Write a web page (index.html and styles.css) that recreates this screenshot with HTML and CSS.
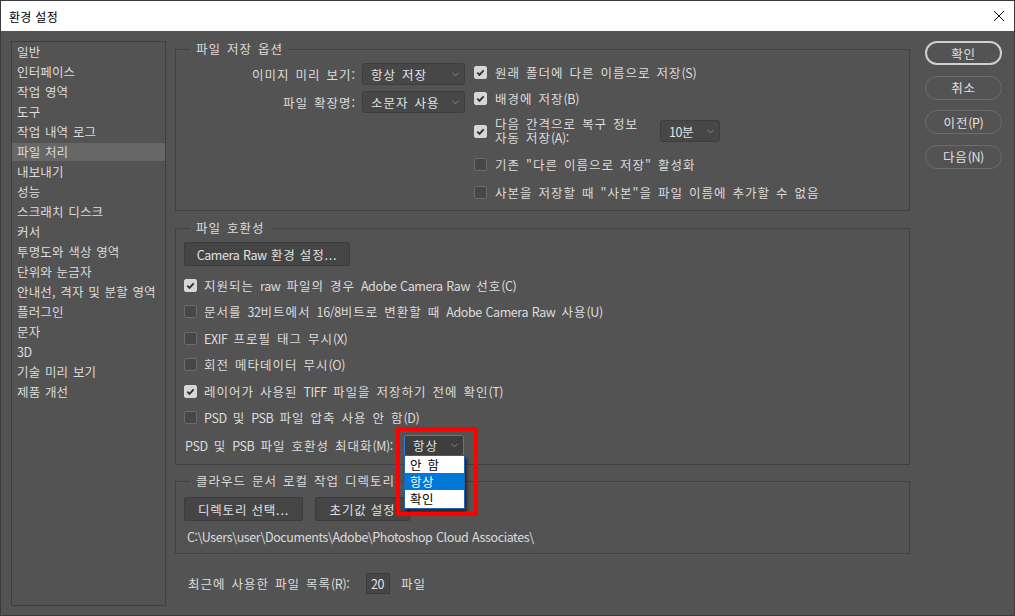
FILE: index.html
```html
<!DOCTYPE html>
<html lang="ko">
<head>
  <meta charset="UTF-8" />
  <title>환경 설정</title>
  <link rel="stylesheet" href="styles.css">
</head>
<body>
  <div class="window">

    <!-- Title bar -->
    <div class="titlebar">
      <span class="title">환경 설정</span>
      <svg class="close" viewBox="0 0 10 10" width="10" height="10">
        <path d="M0 0 L10 10 M10 0 L0 10" stroke="#111" stroke-width="1" fill="none"/>
      </svg>
    </div>

    <div class="content">

      <!-- Category list -->
      <ul class="nav">
        <li>일반</li>
        <li>인터페이스</li>
        <li>작업 영역</li>
        <li>도구</li>
        <li>작업 내역 로그</li>
        <li class="active">파일 처리</li>
        <li>내보내기</li>
        <li>성능</li>
        <li>스크래치 디스크</li>
        <li>커서</li>
        <li>투명도와 색상 영역</li>
        <li>단위와 눈금자</li>
        <li>안내선, 격자 및 분할 영역</li>
        <li>플러그인</li>
        <li>문자</li>
        <li><span class="en">3D</span></li>
        <li>기술 미리 보기</li>
        <li>제품 개선</li>
      </ul>

      <div class="main">

        <!-- File save options -->
        <fieldset class="group save">
          <legend>파일 저장 옵션</legend>
          <div class="save-cols">
            <div class="save-left">
              <label>이미지 미리 보기:</label>
              <div class="select w-103">
                <span>항상 저장</span>
                <svg class="chev" viewBox="0 0 8 5"><path d="M0.5 0.5 L4 4 L7.5 0.5"/></svg>
              </div>
              <label>파일 확장명:</label>
              <div class="select w-103">
                <span>소문자 사용</span>
                <svg class="chev" viewBox="0 0 8 5"><path d="M0.5 0.5 L4 4 L7.5 0.5"/></svg>
              </div>
            </div>
            <div class="save-right">
              <div class="row h-26">
                <span class="cb on"><svg viewBox="0 0 13 13"><path d="M3.3 6.6 L5.5 8.8 L9.7 4.3"/></svg></span>
                <span>원래 폴더에 다른 이름으로 저장<span class="en">(S)</span></span>
              </div>
              <div class="row h-26">
                <span class="cb on"><svg viewBox="0 0 13 13"><path d="M3.3 6.6 L5.5 8.8 L9.7 4.3"/></svg></span>
                <span>배경에 저장<span class="en">(B)</span></span>
              </div>
              <div class="row h-40">
                <span class="cb on"><svg viewBox="0 0 13 13"><path d="M3.3 6.6 L5.5 8.8 L9.7 4.3"/></svg></span>
                <span class="two-line">다음 간격으로 복구 정보<br>자동 저장<span class="en">(A):</span></span>
                <div class="select w-60">
                  <span><span class="en">10</span>분</span>
                  <svg class="chev" viewBox="0 0 8 5"><path d="M0.5 0.5 L4 4 L7.5 0.5"/></svg>
                </div>
              </div>
              <div class="row h-26">
                <span class="cb"></span>
                <span>기존 "다른 이름으로 저장" 활성화</span>
              </div>
              <div class="row h-30">
                <span class="cb"></span>
                <span>사본을 저장할 때 "사본"을 파일 이름에 추가할 수 없음</span>
              </div>
            </div>
          </div>
        </fieldset>

        <!-- File compatibility -->
        <fieldset class="group compat">
          <legend>파일 호환성</legend>
          <button class="btn w-166"><span class="en">Camera Raw</span> 환경 설정...</button>
          <div class="checks">
            <div class="row check">
              <span class="cb on"><svg viewBox="0 0 13 13"><path d="M3.3 6.6 L5.5 8.8 L9.7 4.3"/></svg></span>
              <span>지원되는 <span class="en">raw</span> 파일의 경우 <span class="en">Adobe Camera Raw</span> 선호<span class="en">(C)</span></span>
            </div>
            <div class="row check">
              <span class="cb"></span>
              <span>문서를 <span class="en">32</span>비트에서 <span class="en">16/8</span>비트로 변환할 때 <span class="en">Adobe Camera Raw</span> 사용<span class="en">(U)</span></span>
            </div>
            <div class="row check">
              <span class="cb"></span>
              <span><span class="en">EXIF</span> 프로필 태그 무시<span class="en">(X)</span></span>
            </div>
            <div class="row check">
              <span class="cb"></span>
              <span>회전 메타데이터 무시<span class="en">(O)</span></span>
            </div>
            <div class="row check">
              <span class="cb on"><svg viewBox="0 0 13 13"><path d="M3.3 6.6 L5.5 8.8 L9.7 4.3"/></svg></span>
              <span>레이어가 사용된 <span class="en">TIFF</span> 파일을 저장하기 전에 확인<span class="en">(T)</span></span>
            </div>
            <div class="row check">
              <span class="cb"></span>
              <span><span class="en">PSD</span> 및 <span class="en">PSB</span> 파일 압축 사용 안 함<span class="en">(D)</span></span>
            </div>
          </div>
          <div class="row maximize">
            <span class="max-label"><span class="en">PSD</span> 및 <span class="en">PSB</span> 파일 호환성 최대화<span class="en">(M):</span></span>
            <div class="select-wrap">
              <div class="select w-60 focused">
                <span>항상</span>
                <svg class="chev" viewBox="0 0 8 5"><path d="M0.5 0.5 L4 4 L7.5 0.5"/></svg>
              </div>
              <ul class="dropdown">
                <li>안 함</li>
                <li class="picked">항상</li>
                <li>확인</li>
              </ul>
              <div class="mark"></div>
            </div>
          </div>
        </fieldset>

        <!-- Cloud documents -->
        <fieldset class="group cloud">
          <legend>클라우드 문서 로컬 작업 디렉토리</legend>
          <div class="btn-row">
            <button class="btn w-119">디렉토리 선택...</button>
            <button class="btn w-95">초기값 설정</button>
          </div>
          <div class="path en">C:\Users\user\Documents\Adobe\Photoshop Cloud Associates\</div>
        </fieldset>

        <div class="recent">
          <span class="recent-label">최근에 사용한 파일 목록<span class="en">(R):</span></span>
          <span class="num en">20</span>
          <span class="unit">파일</span>
        </div>
      </div>

      <!-- Dialog buttons -->
      <div class="actions">
        <button class="pill default">확인</button>
        <button class="pill">취소</button>
        <button class="pill">이전<span class="en">(P)</span></button>
        <button class="pill">다음<span class="en">(N)</span></button>
      </div>
    </div>
  </div>
</body>
</html>
```

FILE: styles.css
```css
* {
  box-sizing: border-box;
}

body {
  margin: 0;
  font-family: "Noto Sans CJK KR", "Noto Sans", sans-serif;
  font-size: 12.5px;
  color: #dcdcdc;
  background: #535353;
}

.window {
  width: 1015px;
  height: 616px;
  border: 1px solid #3a3a3a;
  background: #535353;
  overflow: hidden;
}

/* Latin runs are drawn narrower than the hangul around them */
.en {
  letter-spacing: -0.4px;
  word-spacing: 0.5px;
}


.titlebar {
  height: 30px;
  background: #fff;
  display: flex;
  align-items: center;
  justify-content: space-between;
  padding: 0 10px 0 8px;
  color: #000;
}
.title {
  font-size: 12px;
  letter-spacing: 0.3px;
}
.close {
  display: block;
}


.content {
  display: flex;
  padding-top: 10px;
}

.nav {
  list-style: none;
  margin: 0 0 0 10px;
  padding: 1px 0 0 0;
  width: 155px;
  height: 565px;
  border: 1px solid #3f3f3f;
  flex-shrink: 0;
}
.nav li {
  height: 18px;
  line-height: 18px;
  margin-bottom: 2px;
  padding-left: 5px;
  letter-spacing: 0.15px;
  word-spacing: 1px;
  white-space: nowrap;
}
.nav li.active {
  background: #676767;
}


.main {
  width: 735px;
  margin-left: 9px;
  flex-shrink: 0;
  letter-spacing: 1px;
  word-spacing: 1.5px;
}

.group {
  margin: 0;
  padding: 0 8px;
  border: 1px solid #414141;
  min-inline-size: 0;
}
.group legend {
  margin-left: 6px;
  padding: 0 6px;
  line-height: 16px;
}
.save {
  padding-top: 2px;
  padding-bottom: 3px;
}
.compat {
  margin-top: 9px;
  padding-top: 6px;
  padding-bottom: 5px;
}
.cloud {
  margin-top: 8px;
  padding-top: 8px;
  padding-bottom: 8px;
}

.row {
  display: flex;
  align-items: center;
  white-space: nowrap;
}
.h-26 { height: 26px; }
.h-30 { height: 30px; }
.h-40 { height: 40px; }


.cb {
  width: 13px;
  height: 13px;
  border-radius: 2px;
  border: 1px solid #6b6b6b;
  background: #474747;
  margin-right: 7px;
  flex-shrink: 0;
  display: flex;
}
.cb.on {
  background: #d6d6d6;
  border-color: #d6d6d6;
}
.cb svg {
  width: 13px;
  height: 13px;
  margin: -1px;
}
.cb svg path {
  fill: none;
  stroke: #333;
  stroke-width: 1.9;
}


.select {
  height: 22px;
  background: #474747;
  border: 1px solid #3d3d3d;
  border-radius: 3px;
  display: flex;
  align-items: center;
  justify-content: space-between;
  padding: 0 5px 0 8px;
  color: #e4e4e4;
}
.select .chev {
  width: 7px;
  height: 5px;
  flex-shrink: 0;
}
.select .chev path {
  fill: none;
  stroke: #8f8f8f;
  stroke-width: 1;
}
.w-103 { width: 103px; }
.w-60  { width: 60px; }


.save-cols {
  display: flex;
}
.save-left {
  width: 281px;
  margin-right: 9px;
  display: grid;
  grid-template-columns: 172px 103px;
  grid-auto-rows: 28px;
  column-gap: 6px;
  align-items: center;
  align-content: start;
  padding-top: 1px;
}
.save-left label {
  text-align: right;
  white-space: nowrap;
}
.save-right .row .cb {
  margin-right: 8px;
}
.two-line {
  width: 165px;
  line-height: 14px;
  white-space: nowrap;
}


.btn {
  height: 24px;
  background: #454545;
  border: 1px solid #3c3c3c;
  border-radius: 2px;
  color: #e0e0e0;
  font-family: inherit;
  font-size: 12.5px;
  letter-spacing: 0.8px;
  padding: 0;
  display: block;
  white-space: nowrap;
  overflow: hidden;
}
.w-166 { width: 166px; }
.w-119 { width: 119px; }
.w-95  { width: 95px; }

.checks {
  margin-top: 6px;
}
.check {
  height: 26.5px;
}

.maximize {
  height: 28px;
}
.max-label {
  margin-left: 1px;
  margin-right: 8px;
  width: 211px;
}
.select-wrap {
  position: relative;
}
.select.focused {
  height: 21px;
  background: #3e3e3e;
  border-color: #2f7fd8;
  border-radius: 2px;
}
.dropdown {
  position: absolute;
  left: 0;
  top: 20px;
  width: 61px;
  margin: 0;
  padding: 0 0 1px 0;
  list-style: none;
  background: #fff;
  border: 1px solid #1f63b5;
  box-shadow: 2px 3px 3px rgba(0, 0, 0, 0.55);
  z-index: 10;
  color: #000;
  letter-spacing: 0.5px;
}
.dropdown li {
  height: 17px;
  line-height: 17px;
  padding-left: 5px;
}
.dropdown li.picked {
  background: #0078d7;
  color: #fff;
}
.mark {
  position: absolute;
  left: -8px;
  top: -8px;
  width: 82px;
  height: 89px;
  border: 4px solid #ff0000;
  z-index: 11;
}


.btn-row {
  display: flex;
  gap: 12px;
}
.path {
  margin-top: 8px;
  height: 16px;
  line-height: 16px;
  padding-left: 3px;
  white-space: nowrap;
}


.recent {
  display: flex;
  align-items: center;
  margin-top: 19px;
  padding-left: 13px;
  height: 21px;
}
.recent-label {
  width: 178px;
  white-space: nowrap;
}
.num {
  width: 24px;
  height: 21px;
  line-height: 19px;
  background: #464646;
  border: 1px solid #3a3a3a;
  padding-left: 4px;
  color: #e4e4e4;
}
.unit {
  margin-left: 11px;
}


.actions {
  display: flex;
  flex-direction: column;
  gap: 10.6px;
  margin-left: 15px;
}
.pill {
  width: 77px;
  height: 24px;
  border-radius: 12px;
  border: 1px solid #6c6c6c;
  background: transparent;
  color: #e0e0e0;
  font-family: inherit;
  font-size: 12.5px;
  letter-spacing: 0.8px;
  padding: 0;
}
.pill.default {
  border: 2px solid #cfcfcf;
}
```
